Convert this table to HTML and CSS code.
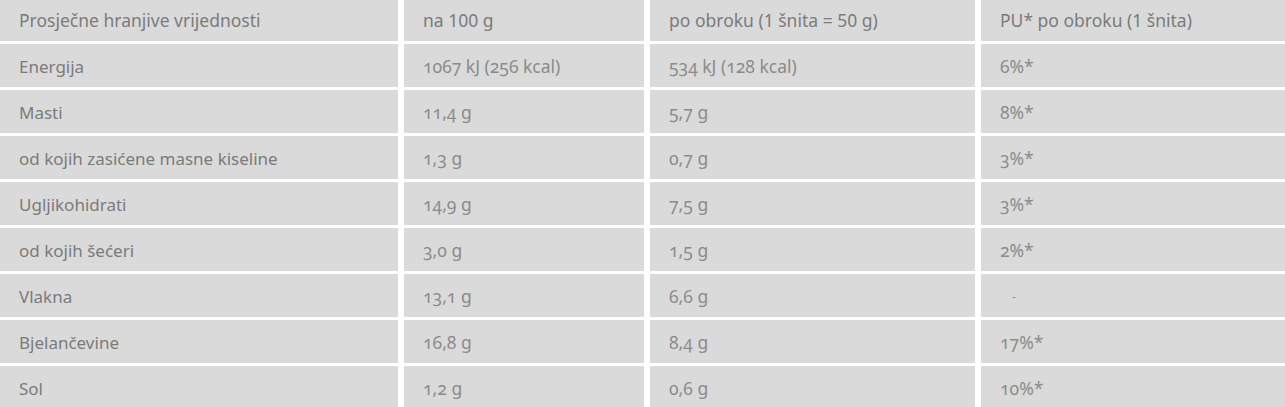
FILE: index.html
```html
<!DOCTYPE html>
<html lang="hr">
<head>
<meta charset="utf-8">
<title>Prosječne hranjive vrijednosti</title>
<link rel="stylesheet" href="styles.css">
</head>
<body>
<div class="nutri">
  <div class="cell head label">Prosječne hranjive vrijednosti</div>
  <div class="cell head">na 100 g</div>
  <div class="cell head">po obroku (1 šnita = 50 g)</div>
  <div class="cell head">PU* po obroku (1 šnita)</div>

  <div class="cell label">Energija</div>
  <div class="cell val">1067 kJ (256 kcal)</div>
  <div class="cell val">534 kJ (128 kcal)</div>
  <div class="cell val">6%*</div>

  <div class="cell label">Masti</div>
  <div class="cell val">11,4 g</div>
  <div class="cell val">5,7 g</div>
  <div class="cell val">8%*</div>

  <div class="cell label">od kojih zasićene masne kiseline</div>
  <div class="cell val">1,3 g</div>
  <div class="cell val">0,7 g</div>
  <div class="cell val">3%*</div>

  <div class="cell label">Ugljikohidrati</div>
  <div class="cell val">14,9 g</div>
  <div class="cell val">7,5 g</div>
  <div class="cell val">3%*</div>

  <div class="cell label">od kojih šećeri</div>
  <div class="cell val">3,0 g</div>
  <div class="cell val">1,5 g</div>
  <div class="cell val">2%*</div>

  <div class="cell label">Vlakna</div>
  <div class="cell val">13,1 g</div>
  <div class="cell val">6,6 g</div>
  <div class="cell val dash">-</div>

  <div class="cell label">Bjelančevine</div>
  <div class="cell val">16,8 g</div>
  <div class="cell val">8,4 g</div>
  <div class="cell val">17%*</div>

  <div class="cell label">Sol</div>
  <div class="cell val">1,2 g</div>
  <div class="cell val">0,6 g</div>
  <div class="cell val">10%*</div>
</div>
</body>
</html>
```
FILE: styles.css
```css
html, body {
  margin: 0;
  padding: 0;
  background: #ffffff;
}
body {
  font-family: "Noto Sans", "Open Sans", sans-serif;
  font-size: 17px;
  overflow: hidden;
}
.nutri {
  display: grid;
  grid-template-columns: 398px 240px 325px 1fr;
  grid-auto-rows: 43px;
  column-gap: 6px;
  row-gap: 3px;
  margin-top: -2px;
}
.cell {
  background: #dadada;
  display: flex;
  align-items: center;
  padding: 1px 20px 0 19px;
  color: #7b7b7b;
  white-space: nowrap;
}
.head {
  font-size: 17.5px;
}
.label {
  color: #7b7b7b;
}
.val {
  color: #8b8b8b;
  font-size: 17.5px;
  font-variant-numeric: oldstyle-nums;
}
.dash {
  padding-left: 31px;
  font-size: 12px;
}
```
